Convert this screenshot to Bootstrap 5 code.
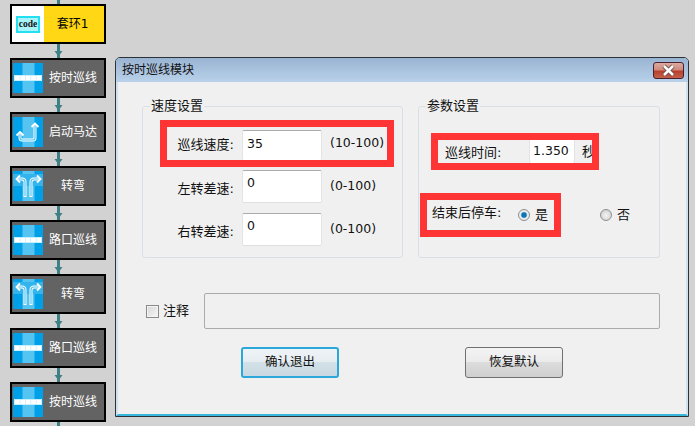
<!DOCTYPE html>
<html lang="zh-CN">
<head>
  <meta charset="UTF-8" />
  <meta name="viewport" content="width=device-width, initial-scale=1.0"/>
  <title>按时巡线模块</title>
  <link href="https://cdn.jsdelivr.net/npm/bootstrap@5.3.3/dist/css/bootstrap.min.css" rel="stylesheet"/>
  <style>
    html, body {
      height: 426px;
      overflow: hidden;
    }
    body {
      background-color: #d2d2d2;
      font-family: "DejaVu Sans", "Noto Sans CJK SC", sans-serif;
      font-size: 13px;
      color: #111;
    }
    /* flow chart on the left */
    .chart {
      width: 96px;
      margin-left: 10px;
    }
    .link-top { height: 4px; overflow: hidden; flex: none; }
    .link-arrow { display: block; flex: none; }
    .link-top .link-arrow { margin-top: -10px; }
    .block {
      flex: none;
      height: 40px;
      border: 2px solid #000;
      background: #636363;
      color: #fff;
      font-size: 12px;
    }
    .block-icon { flex: none; margin-left: 1px; display: block; }
    .block-name { flex: 1; text-align: center; padding-right: 1px; }
    .block-code { background: #ffd714; color: #000; }
    .block-code .block-name { padding-right: 3px; }
    .code-side {
      flex: none;
      width: 32px;
      height: 100%;
      background: #fff;
    }
    .code-tag {
      width: 24px;
      height: 17px;
      background: #a9f4fb;
      border: 2px solid #22e0f2;
      font: bold 9.5px/12px "Liberation Serif", serif;
      color: #111;
      text-align: center;
    }
    /* dialog */
    .win {
      position: absolute;
      left: 115px;
      top: 57px;
      width: 574px;
      height: 360px;
      border: 1px solid #2c3238;
      border-radius: 5px 5px 0 0;
      background: #f0f0f0;
      overflow: hidden;
    }
    .win-title {
      height: 24px;
      padding-left: 6px;
      padding-right: 4px;
      font-size: 12px;
      background: linear-gradient(#99b4d2, #b9d1ea);
    }
    .win-close {
      width: 31px;
      height: 17px;
      margin-top: 0;
      padding: 0;
      border: 1px solid #4a2130;
      border-radius: 3px;
      background: linear-gradient(#dcaaa0 0, #cf8a7c 45%, #b9402c 55%, #c2604c 100%);
    }
    .win-close svg { display: block; margin: 0 auto; }
    .win-body {
      flex: 1;
      padding-left: 24px;
      border-left: 2px solid #cfe0ee;
      border-right: 2px solid #cfe0ee;
      border-bottom: 2px solid #38b7dd;
    }
    .group {
      height: 160px;
      margin: 16px 0 0;
      padding: 0;
      border: 1px solid #d9dfe6;
      border-radius: 3px;
      min-width: 0;
    }
    .group-left { width: 261px; }
    .group-right { width: 242px; margin-left: 15px; }
    .group-title {
      float: none;
      width: auto;
      margin: 0 0 0 7px;
      padding: 0 1px;
      font-size: 13px;
      line-height: 16px;
    }
    .mark-frame {
      border: 7px solid #ff3535;
      overflow: hidden;
    }
    .speed-row { padding-left: 24px; height: 33px; }
    .speed-label { flex: none; width: 67px; text-align: right; margin-right: 8px; padding-top: 4px; }
    .frame-speed {
      width: 234px;
      height: 47px;
      margin: 6px 0 3px 17px;
    }
    .frame-speed .speed-label { padding-top: 3px; }
    .speed-row .value-box, .frame-speed .value-box { width: 80px; }
    .value-box {
      flex: none;
      height: 100%;
      padding: 0 0 8px 4px;
      border: 0;
      border-top: 1px solid #ababab;
      border-left: 1px solid #e3e3e3;
      border-right: 1px solid #e3e3e3;
      border-bottom: 1px solid #dfdfdf;
      border-radius: 2px;
      background: #fff;
      font-size: 12.5px;
      color: #111;
      outline: 0;
    }
    .frame-speed .value-box { height: 30px; margin-top: 3px; border-bottom: 0; padding-bottom: 5px; }
    .speed-hint { flex: none; margin-left: 8px; font-size: 12.5px; }
    .row-gap { margin-top: 10px; }
    .frame-time {
      width: 168px;
      height: 37px;
      margin: 19px 0 0 12px;
      padding-left: 7px;
    }
    .time-label { flex: none; width: 84px; padding-top: 2px; }
    .frame-time .value-box {
      width: 46px;
      padding: 0 0 2px 3px;
      border-top: 0;
      border-bottom: 0;
    }
    .time-unit { flex: none; margin-left: 7px; }
    .frame-stop {
      width: 141px;
      height: 44px;
      margin: 23px 0 0 1px;
      padding-left: 5px;
    }
    .stop-label { flex: none; width: 86px; padding-bottom: 4px; }
    .win-radio {
      appearance: none;
      flex: none;
      width: 12px;
      height: 12px;
      margin: 0 5px 0 0;
      border: 1px solid #8f8f8f;
      border-radius: 50%;
      background: radial-gradient(circle at 50% 55%, #f4f4f4 0, #dcdcdc 55%, #c4c4c4 100%);
    }
    .win-radio:checked {
      background: radial-gradient(circle, #0a74b5 0, #0a74b5 30%, #f1f1f1 52%, #d8d8d8 100%);
    }
    .radio-text { flex: none; }
    .radio-no { margin: 23px 0 0 39px; }
    .radio-row { height: 44px; }
    .note-row { height: 36px; margin: 35px 0 0 4px; }
    .note-check {
      appearance: none;
      flex: none;
      width: 13px;
      height: 13px;
      margin: 0 4px 0 0;
      border: 1px solid #8a8a8a;
      background: linear-gradient(135deg, #d6d6d6, #f7f7f7);
      box-shadow: inset 0 0 0 1px #f4f4f4;
    }
    .note-label { flex: none; width: 26px; margin-right: 15px; }
    .note-box {
      flex: none;
      width: 456px;
      height: 36px;
      border: 1px solid #ababab;
      border-radius: 2px;
      background: #f0f0f0;
      outline: 0;
    }
    .btn-row { margin: 18px 0 0 99px; }
    .win-btn {
      width: 98px;
      height: 31px;
      padding: 0;
      font-size: 12.5px;
      color: #111;
      border-radius: 3px;
      border: 1px solid #707070;
      background: linear-gradient(#f3f3f3 0, #ebebeb 48%, #dcdcdc 50%, #cfcfcf 100%);
    }
    .win-btn-main {
      border: 2px solid #2ba8da;
      background: linear-gradient(#eef3f6 0, #e6edf1 48%, #d3e0e7 50%, #c9d9e1 100%);
    }
    .win-btn-reset { margin-left: 126px; }
  </style>
</head>
<body>
  <svg width="0" height="0" class="position-absolute">
    <defs>
      <symbol id="arrowLink" viewBox="0 0 9 14">
        <rect x="3" y="0" width="3" height="14" fill="#3f8086"/>
        <polygon points="0.5,7 8.5,7 4.5,12.5" fill="#3f8086"/>
      </symbol>
      <symbol id="tileLine" viewBox="0 0 30 30">
        <rect width="30" height="30" fill="#00a0e9"/>
        <rect x="9.5" width="12" height="30" fill="#55c4f1"/>
        <rect x="1" y="12" width="28" height="6" fill="#c4f0fd"/>
        <path d="M2 15H28" stroke="#fff" stroke-width="4" stroke-dasharray="4.6 .8"/>
      </symbol>
      <symbol id="tileStart" viewBox="0 0 30 30">
        <rect width="30" height="30" fill="#00a0e9"/>
        <rect x="9.5" width="12" height="30" fill="#55c4f1"/>
        <path d="M22 8V21Q22 23 20 23H9Q7 23 7 21V17" fill="none" stroke="#fff" stroke-width="3"/>
        <path d="M22 8V21Q22 23 20 23H9Q7 23 7 21V17" fill="none" stroke="#55c4f1" stroke-width="1.2"/>
        <path d="M18.500 10L22 6.500L25.500 10M3.500 18.500L7 15L10.500 18.500" fill="none" stroke="#fff" stroke-width="1.800"/>
      </symbol>
      <symbol id="tileTurn" viewBox="0 0 30 30">
        <rect width="30" height="30" fill="#00a0e9"/>
        <rect x="9.500" width="12" height="30" fill="#55c4f1"/>
        <rect y="3" width="30" height="12" fill="#33b4ec"/>
        <path d="M12 26V11Q12 8 9 8H5M18 26V11Q18 8 21 8H26" fill="none" stroke="#fff" stroke-width="3"/>
        <path d="M12 25V11Q12 8 9 8H5M18 25V11Q18 8 21 8H26" fill="none" stroke="#55c4f1" stroke-width="1.200"/>
        <path d="M7 4.500L3.500 8L7 11.500M24 4.500L27.500 8L24 11.500" fill="none" stroke="#fff" stroke-width="1.800"/>
      </symbol>
    </defs>
  </svg>

  <div class="chart d-flex flex-column align-items-stretch">
    <div class="link-top align-self-center"><svg class="link-arrow" width="9" height="14"><use href="#arrowLink"/></svg></div>
    <div class="block block-code d-flex align-items-center">
      <div class="code-side d-flex align-items-center justify-content-center"><div class="code-tag">code</div></div>
      <span class="block-name">套环1</span>
    </div>
    <svg class="link-arrow align-self-center" width="9" height="14"><use href="#arrowLink"/></svg>
    <div class="block d-flex align-items-center">
      <svg class="block-icon" width="30" height="30"><use href="#tileLine"/></svg>
      <span class="block-name">按时巡线</span>
    </div>
    <svg class="link-arrow align-self-center" width="9" height="14"><use href="#arrowLink"/></svg>
    <div class="block d-flex align-items-center">
      <svg class="block-icon" width="30" height="30"><use href="#tileStart"/></svg>
      <span class="block-name">启动马达</span>
    </div>
    <svg class="link-arrow align-self-center" width="9" height="14"><use href="#arrowLink"/></svg>
    <div class="block d-flex align-items-center">
      <svg class="block-icon" width="30" height="30"><use href="#tileTurn"/></svg>
      <span class="block-name">转弯</span>
    </div>
    <svg class="link-arrow align-self-center" width="9" height="14"><use href="#arrowLink"/></svg>
    <div class="block d-flex align-items-center">
      <svg class="block-icon" width="30" height="30"><use href="#tileLine"/></svg>
      <span class="block-name">路口巡线</span>
    </div>
    <svg class="link-arrow align-self-center" width="9" height="14"><use href="#arrowLink"/></svg>
    <div class="block d-flex align-items-center">
      <svg class="block-icon" width="30" height="30"><use href="#tileTurn"/></svg>
      <span class="block-name">转弯</span>
    </div>
    <svg class="link-arrow align-self-center" width="9" height="14"><use href="#arrowLink"/></svg>
    <div class="block d-flex align-items-center">
      <svg class="block-icon" width="30" height="30"><use href="#tileLine"/></svg>
      <span class="block-name">路口巡线</span>
    </div>
    <svg class="link-arrow align-self-center" width="9" height="14"><use href="#arrowLink"/></svg>
    <div class="block d-flex align-items-center">
      <svg class="block-icon" width="30" height="30"><use href="#tileLine"/></svg>
      <span class="block-name">按时巡线</span>
    </div>
    <svg class="link-arrow align-self-center" width="9" height="14"><use href="#arrowLink"/></svg>
  </div>

  <div class="win d-flex flex-column">
    <div class="win-title d-flex align-items-center justify-content-between">
      <span>按时巡线模块</span>
      <button type="button" class="win-close" aria-label="Close">
        <svg width="17" height="13" viewBox="0 0 17 13">
          <path d="M4 2L13 11M13 2L4 11" stroke="#6e4a48" stroke-width="4.500"/>
          <path d="M4 2L13 11M13 2L4 11" stroke="#fff" stroke-width="2.500"/>
        </svg>
      </button>
    </div>
    <div class="win-body">
      <div class="d-flex">
        <fieldset class="group group-left">
          <legend class="group-title">速度设置</legend>
          <div class="mark-frame frame-speed d-flex align-items-center">
            <label class="speed-label">巡线速度:</label>
            <input class="value-box" type="text" value="35"/>
            <span class="speed-hint">(10-100)</span>
          </div>
          <div class="speed-row d-flex align-items-center">
            <label class="speed-label">左转差速:</label>
            <input class="value-box" type="text" value="0"/>
            <span class="speed-hint">(0-100)</span>
          </div>
          <div class="speed-row row-gap d-flex align-items-center">
            <label class="speed-label">右转差速:</label>
            <input class="value-box" type="text" value="0"/>
            <span class="speed-hint">(0-100)</span>
          </div>
        </fieldset>
        <fieldset class="group group-right">
          <legend class="group-title">参数设置</legend>
          <div class="mark-frame frame-time d-flex align-items-stretch">
            <label class="time-label d-flex align-items-center">巡线时间:</label>
            <input class="value-box" type="text" value="1.350"/>
            <span class="time-unit d-flex align-items-center">秒</span>
          </div>
          <div class="d-flex align-items-start">
            <div class="mark-frame frame-stop d-flex align-items-center">
              <span class="stop-label">结束后停车:</span>
              <input class="win-radio" type="radio" name="stopCar" checked/>
              <span class="radio-text">是</span>
            </div>
            <div class="radio-no d-flex align-items-center radio-row">
              <input class="win-radio" type="radio" name="stopCar"/>
              <span class="radio-text">否</span>
            </div>
          </div>
        </fieldset>
      </div>
      <div class="note-row d-flex align-items-center">
        <input class="note-check" type="checkbox"/>
        <span class="note-label">注释</span>
        <input class="note-box" type="text"/>
      </div>
      <div class="btn-row d-flex">
        <button type="button" class="btn win-btn win-btn-main">确认退出</button>
        <button type="button" class="btn win-btn win-btn-reset">恢复默认</button>
      </div>
    </div>
  </div>

  <script src="https://cdn.jsdelivr.net/npm/bootstrap@5.3.3/dist/js/bootstrap.bundle.min.js"></script>
</body>
</html>
